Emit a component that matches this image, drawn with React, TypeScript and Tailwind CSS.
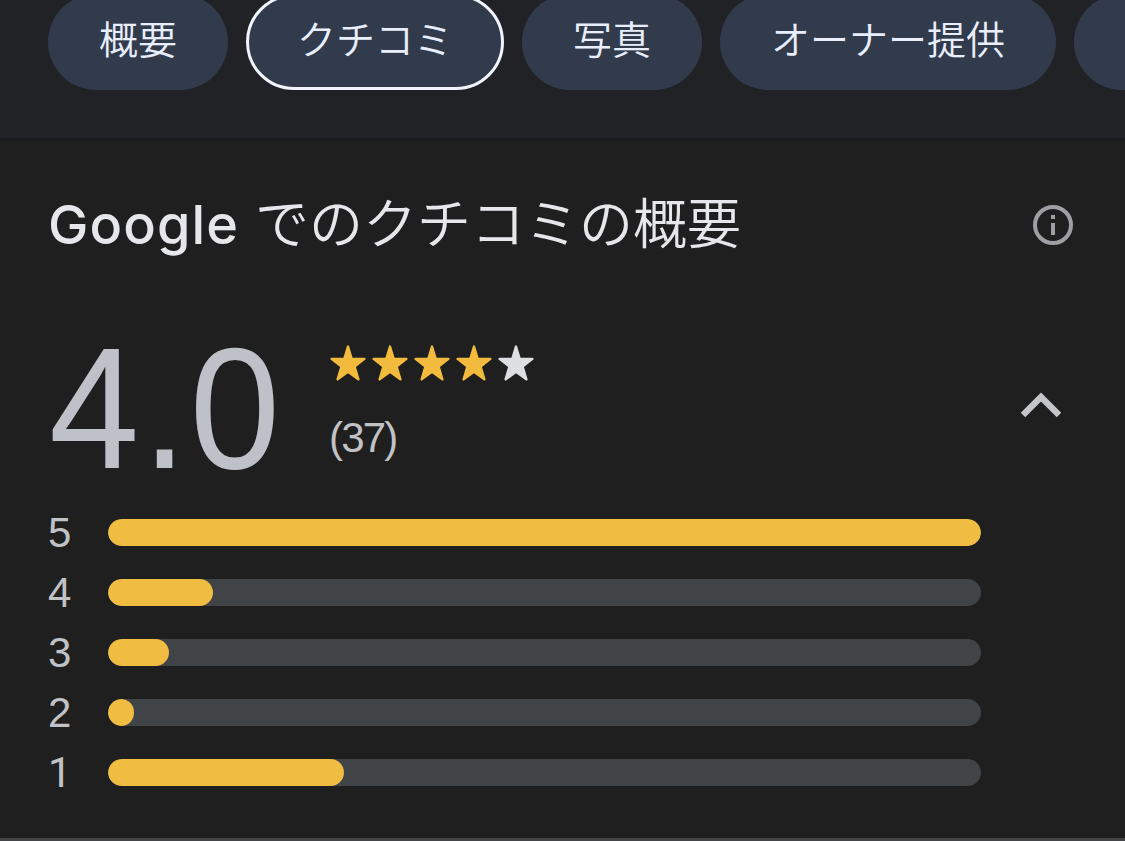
import clsx from 'clsx';

interface Tab {
  id: string;
  label?: string;
  active?: boolean;
}

interface RatingRow {
  stars: number;
  percent: number;
}

const TABS: Tab[] = [
  { id: 'overview', label: '概要' },
  { id: 'reviews', label: 'クチコミ', active: true },
  { id: 'photos', label: '写真' },
  { id: 'owner', label: 'オーナー提供' },
  { id: 'more' },
];

const RATINGS: RatingRow[] = [
  { stars: 5, percent: 100 },
  { stars: 4, percent: 12.03 },
  { stars: 3, percent: 6.99 },
  { stars: 2, percent: 3 },
  { stars: 1, percent: 27.03 },
];

const StarIcon = ({ filled }: { filled: boolean }) => (
  <svg
    viewBox="0 0 36 36"
    className={clsx('size-9 shrink-0', filled ? 'text-[#f2bb3d]' : 'text-[#dcdee2]')}
    fill="currentColor"
    stroke="currentColor"
    strokeWidth="2.4"
    strokeLinejoin="round"
  >
    <path d="M18 1.6 21.7 13.9 34.4 13.9 24.6 21.6 28.4 34.4 18 26.9 7.6 34.4 11.4 21.6 1.6 13.9 14.3 13.9Z" />
  </svg>
);

const InfoIcon = () => (
  <svg viewBox="0 0 40 40" className="size-10 text-[#9e9fa3]" fill="none">
    <circle cx="20" cy="20" r="18" stroke="currentColor" strokeWidth="4" />
    <path d="M18 10h4v4h-4zM18 18h4v12h-4z" fill="currentColor" />
  </svg>
);

const ChevronUpIcon = () => (
  <svg viewBox="0 0 40 25" className="h-[25px] w-10 text-[#c4c5c9]" fill="none">
    <path d="M2 23 20 5 38 23" stroke="currentColor" strokeWidth="6.4" />
  </svg>
);

const TabBar = () => (
  <nav className="h-[138px] shrink-0 overflow-hidden bg-[#202226] pl-12">
    <div className="-mt-1.5 flex gap-[18px]">
      {TABS.map((tab) => (
        <button
          key={tab.id}
          className={clsx(
            'flex h-24 min-w-[180px] shrink-0 items-center justify-center rounded-full border-3 bg-[#323b4c] px-12 pb-2.5 text-[39px] leading-none font-[350] whitespace-nowrap text-[#e8eefc]',
            tab.active ? 'border-[#f1f4fc]' : 'border-transparent'
          )}
        >
          {tab.label}
        </button>
      ))}
    </div>
  </nav>
);

const RatingBars = () => (
  <div className="mt-[33px] flex flex-col pl-12">
    {RATINGS.map((row) => (
      <div key={row.stars} className="flex h-[60px] items-center">
        <span
          className={clsx(
            'w-[60px] pt-0.5 text-[42px] leading-none text-[#c1c2c5]',
            // Liberation draws its 1 with a foot serif
            row.stars === 1 ? "font-['Roboto',sans-serif]" : "font-['Liberation_Sans',sans-serif]"
          )}
        >
          {row.stars}
        </span>
        <div className="h-[27px] w-[873px] overflow-hidden rounded-full bg-[#414446]">
          <div className="h-full rounded-full bg-[#f0bc42]" style={{ width: `${row.percent}%` }} />
        </div>
      </div>
    ))}
  </div>
);

export default function App() {
  return (
    <div
      lang="ja"
      className="flex h-[841px] w-full flex-col overflow-hidden bg-[#1f1f1f] font-['Noto_Sans_CJK_JP',sans-serif]"
    >
      <TabBar />
      <section className="flex-1 border-t-3 border-[#191c1a]">
        <div className="flex h-[168px] items-center justify-between pr-[52px] pl-12">
          <h1 className="flex items-baseline pb-1 text-[54px] leading-none font-[350] whitespace-nowrap text-[#e6e7ea]">
            <span className="w-[207px] font-['Inter',sans-serif] font-medium tracking-[1.1px]">Google</span>
            <span>でのクチコミの概要</span>
          </h1>
          <InfoIcon />
        </div>

        <div className="flex h-[160px] items-start pr-16 pl-12">
          <div className="w-[282px] origin-left scale-x-[0.943] pt-[19px] pl-px font-['Liberation_Sans',sans-serif] text-[172px] leading-[160px] tracking-[3px] text-[#bec1c8]">
            4.0
          </div>
          <div className="flex-1 pt-9">
            <div className="flex gap-1.5">
              {[1, 2, 3, 4, 5].map((n) => (
                <StarIcon key={n} filled={n <= 4} />
              ))}
            </div>
            <div className="-ml-px mt-9 font-['Liberation_Sans',sans-serif] text-[42px] leading-none tracking-[-1.8px] text-[#c1c2c5]">
              (37)
            </div>
          </div>
          <div className="pt-[83px]">
            <ChevronUpIcon />
          </div>
        </div>

        <RatingBars />
      </section>
      <div className="h-[3px] shrink-0 bg-[#444547]" />
    </div>
  );
}
